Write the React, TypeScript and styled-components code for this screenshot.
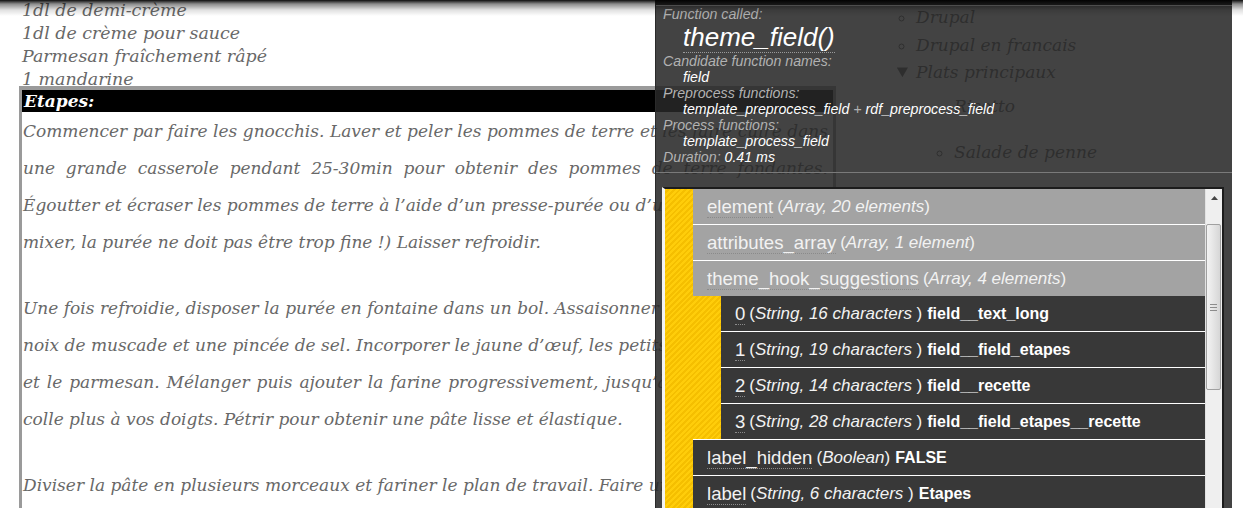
import React from 'react'
import styled, { createGlobalStyle } from 'styled-components'

const serif = `"DejaVu Serif", Georgia, serif`
const sans = `"Liberation Sans", Arial, sans-serif`

const GlobalStyle = createGlobalStyle`
    html, body {
        margin: 0;
        padding: 0;
        background: #fff;
        overflow: hidden;
    }
`

const Page = styled.div`
    position: relative;
    width: 1243px;
    height: 508px;
    overflow: hidden;
    display: flex;
    align-items: flex-start;
    font-family: ${serif};
    font-style: italic;
    color: #686868;
`

const TopShade = styled.div`
    position: absolute;
    left: 0;
    top: 0;
    right: 0;
    height: 16px;
    z-index: 5;
    pointer-events: none;
    background: linear-gradient(to bottom, rgba(0, 0, 0, 0.95) 0, rgba(0, 0, 0, 0.45) 4px, rgba(0, 0, 0, 0.12) 10px, rgba(0, 0, 0, 0) 16px);
`

const Main = styled.div`
    flex: none;
    width: 817px;
    margin: -1px 0 0 19px;
`

const Ingredients = styled.div`
    padding-left: 3px;
    font-size: 17.4px;
    line-height: 23px;
`

const StepsBox = styled.section`
    position: relative;
    margin-top: -5px;
    border-top: 4px solid #9a9a9a;
    border-left: 3px solid #9a9a9a;
    border-right: 3px solid #9a9a9a;
    background: #fff;
`

const StepsHead = styled.h3`
    margin: 0;
    height: 22px;
    padding-left: 2px;
    background: #000;
    color: #fff;
    font-size: 17px;
    font-weight: bold;
    line-height: 22px;
`

const Para = styled.div`
    padding: 1px 5px 0 1px;
    margin-bottom: 28px;
    font-size: 17px;
    line-height: 37px;
`

const TextLine = styled.div<{ $last?: boolean }>`
    white-space: nowrap;
    text-align: justify;
    text-align-last: ${p => (p.$last ? 'left' : 'justify')};
`

const Sidebar = styled.ul`
    margin: 4px 0 0 60px;
    padding-left: 20px;
    font-size: 17px;
    line-height: 27.5px;
    list-style: circle;
    color: #5f5f5f;
`

const MenuItem = styled.li<{ $open?: boolean }>`
    list-style-type: ${p => (p.$open ? 'disclosure-open' : 'circle')};
`

const SubMenu = styled.ul`
    margin: 8px 0 0;
    padding-left: 38px;
    list-style: none;
    line-height: 23px;
`

const SubItem = styled.li<{ $bullet?: boolean }>`
    margin-bottom: 23px;
    list-style-type: ${p => (p.$bullet ? 'circle' : 'none')};
`

/* theme debugger overlay */

const Overlay = styled.aside`
    position: absolute;
    left: 655px;
    top: 0;
    width: 577px;
    height: 508px;
    z-index: 4;
    box-sizing: border-box;
    border-left: 1px solid #2a2a2a;
    background: rgba(39, 39, 39, 0.87);
    font-family: ${sans};
    font-style: italic;
    font-size: 14.2px;
    line-height: 16px;
    color: #fff;
    overflow: hidden;
`

const OverlayTop = styled.div`
    height: 5px;
    background: #262626;
    border-bottom: 1px solid #7a7a7a;
`

const Info = styled.div`
    padding: 0 0 7px 7px;
    border-bottom: 1px solid #7a7a7a;
`

const Label = styled.div`
    color: #b2b2b2;
`

const Value = styled.div`
    padding-left: 20px;
    color: #fff;
`

const Plus = styled.span`
    color: #b2b2b2;
`

const White = styled.span`
    color: #fff;
`

const Title = styled.div`
    padding-left: 20px;
`

const TitleText = styled.span`
    display: inline-block;
    font-size: 26px;
    line-height: 30px;
    border-bottom: 1px dotted #9a9a9a;
`

const ListBox = styled.div`
    display: flex;
    margin: 14px 8px 0 6px;
    height: 330px;
    border-top: 2px solid #1c1c1c;
    border-left: 3px solid #f3f3f3;
    border-right: 2px solid #1c1c1c;
    font-style: normal;
`

const Tree = styled.div`
    flex: 1;
    min-width: 0;
    background: repeating-linear-gradient(135deg, #ffcd0a 0 2px, #f5bf00 2px 4px);
`

const Group = styled.div`
    margin-left: 28px;
`

const Row = styled.div<{ $light?: boolean }>`
    display: flex;
    align-items: center;
    height: 35px;
    padding-left: 14px;
    border-top: 1px solid #fff;
    background: ${p => (p.$light ? '#a3a3a3' : '#383838')};
    color: #f2f2f2;
    white-space: nowrap;
    overflow: hidden;
    &:first-child {
        border-top: 0;
    }
`

const Key = styled.span`
    font-size: 18.6px;
    line-height: 21px;
    border-bottom: 1px dotted #8a8a8a;
`

const Meta = styled.span`
    font-size: 17px;
    margin-left: 4px;
    em {
        font-style: italic;
    }
`

const Val = styled.b`
    margin-left: 5px;
    font-size: 16px;
    font-weight: bold;
    color: #fff;
`

const Scrollbar = styled.div`
    flex: none;
    width: 17px;
    display: flex;
    flex-direction: column;
    background: #efefef;
    border-left: 1px solid #e2e2e2;
    box-sizing: border-box;
`

const ScrollButton = styled.div`
    height: 17px;
    display: flex;
    align-items: center;
    justify-content: center;
`

const Thumb = styled.div`
    margin: 18px 1px 0 0;
    height: 164px;
    border: 1px solid #a0a0a0;
    border-radius: 2px;
    background: linear-gradient(to right, #f3f3f3, #e2e2e2 60%, #d6d6d6);
    display: flex;
    flex-direction: column;
    align-items: center;
    justify-content: center;
    gap: 2px;
`

const Grip = styled.div`
    width: 7px;
    height: 1px;
    background: #8c8c8c;
`

type Child = { index: string; len: number; value: string }

const suggestions: Child[] = [
    { index: '0', len: 16, value: 'field__text_long' },
    { index: '1', len: 19, value: 'field__field_etapes' },
    { index: '2', len: 14, value: 'field__recette' },
    { index: '3', len: 28, value: 'field__field_etapes__recette' }
]

const steps: string[][] = [
    [
        'Commencer par faire les gnocchis. Laver et peler les pommes de terre et les faire cuire dans',
        'une grande casserole pendant 25-30min pour obtenir des pommes de terre fondantes.',
        'Égoutter et écraser les pommes de terre à l’aide d’un presse-purée ou d’une fourchette (pas de',
        'mixer, la purée ne doit pas être trop fine !) Laisser refroidir.'
    ],
    [
        'Une fois refroidie, disposer la purée en fontaine dans un bol. Assaisonner avec le poivre et la',
        'noix de muscade et une pincée de sel. Incorporer le jaune d’œuf, les petits morceaux de courge',
        'et le parmesan. Mélanger puis ajouter la farine progressivement, jusqu’à ce que la pâte ne',
        'colle plus à vos doigts. Pétrir pour obtenir une pâte lisse et élastique.'
    ],
    [
        'Diviser la pâte en plusieurs morceaux et fariner le plan de travail. Faire un cordon de pâte et',
        'le couper en petits morceaux.'
    ]
]

const ArrowUp = () =>
    <svg width="7" height="4" viewBox="0 0 7 4">
        <path d="M0 4 L3.5 0 L7 4 Z" fill="#444" />
    </svg>

export default function App() {
    return (
        <Page>
            <GlobalStyle />
            <TopShade />
            <Main>
                <Ingredients>
                    <div>1dl de demi-crème</div>
                    <div>1dl de crème pour sauce</div>
                    <div>Parmesan fraîchement râpé</div>
                    <div>1 mandarine</div>
                </Ingredients>
                <StepsBox>
                    <StepsHead>Etapes:</StepsHead>
                    { steps.map((lines, i) =>
                        <Para key={ i }>
                            { lines.map((line, j) =>
                                <TextLine key={ j } $last={ j === lines.length - 1 }>{ line }</TextLine>
                            ) }
                        </Para>
                    ) }
                </StepsBox>
            </Main>
            <Sidebar>
                <MenuItem>Drupal</MenuItem>
                <MenuItem>Drupal en francais</MenuItem>
                <MenuItem $open>
                    Plats principaux
                    <SubMenu>
                        <SubItem>Risotto</SubItem>
                        <SubItem $bullet>Salade de penne</SubItem>
                    </SubMenu>
                </MenuItem>
            </Sidebar>

            <Overlay>
                <OverlayTop />
                <Info>
                    <Label>Function called:</Label>
                    <Title><TitleText>theme_field()</TitleText></Title>
                    <Label>Candidate function names:</Label>
                    <Value>field</Value>
                    <Label>Preprocess functions:</Label>
                    <Value>template_preprocess_field <Plus>+</Plus> rdf_preprocess_field</Value>
                    <Label>Process functions:</Label>
                    <Value>template_process_field</Value>
                    <Label>Duration: <White>0.41 ms</White></Label>
                </Info>
                <ListBox>
                    <Tree>
                        <Group>
                            <Row $light>
                                <Key>element</Key>
                                <Meta>(<em>Array, 20 elements</em>)</Meta>
                            </Row>
                            <Row $light>
                                <Key>attributes_array</Key>
                                <Meta>(<em>Array, 1 element</em>)</Meta>
                            </Row>
                            <Row $light>
                                <Key>theme_hook_suggestions</Key>
                                <Meta>(<em>Array, 4 elements</em>)</Meta>
                            </Row>
                            <Group>
                                { suggestions.map(s =>
                                    <Row key={ s.index }>
                                        <Key>{ s.index }</Key>
                                        <Meta>(<em>String, { s.len } characters </em>)</Meta>
                                        <Val>{ s.value }</Val>
                                    </Row>
                                ) }
                            </Group>
                            <Row>
                                <Key>label_hidden</Key>
                                <Meta>(<em>Boolean</em>)</Meta>
                                <Val>FALSE</Val>
                            </Row>
                            <Row>
                                <Key>label</Key>
                                <Meta>(<em>String, 6 characters </em>)</Meta>
                                <Val>Etapes</Val>
                            </Row>
                        </Group>
                    </Tree>
                    <Scrollbar>
                        <ScrollButton><ArrowUp /></ScrollButton>
                        <Thumb>
                            <Grip />
                            <Grip />
                            <Grip />
                        </Thumb>
                    </Scrollbar>
                </ListBox>
            </Overlay>
        </Page>
    )
}
